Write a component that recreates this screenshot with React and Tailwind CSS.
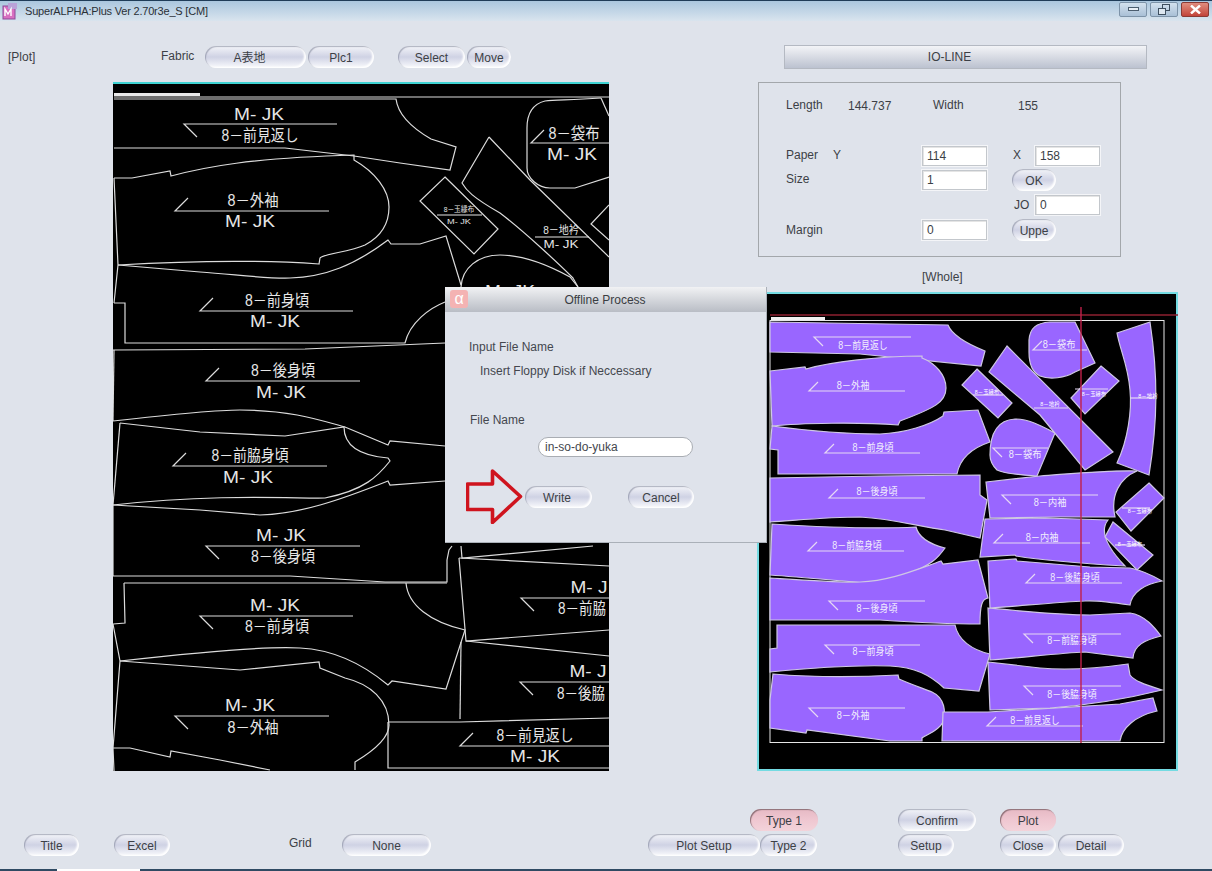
import React from 'react';

// marker layout pieces, all points are in page pixels (svg viewBox starts at panel corner)
const leftLines = [
  'M114 97H609',
  'M114 99H396C398 115 412 128 431 139L456 147L450 170L400 163L354 156L285 148H114',
  'M114 178H132L170 171L171 176C205 167 250 158 354 155V160C375 172 389 190 389 207C389 222 382 236 365 245C350 252 322 254 320 258L319 264C290 262 220 259 118 265',
  'M114 178L118 265L114 303',
  'M118 265L200 272C240 275 270 279 290 278C325 277 355 265 388 240L391 244H420L446 236L461 285',
  'M114 303H125V343H405C410 322 430 308 445 302',
  'M445 177L498 229L474 254L420 201Z',
  'M489 137L462 183C466 190 472 197 500 213C525 232 560 265 573 278L578 287',
  'M489 137L530 180L609 257',
  'M601 98C570 100 556 100 545 101C533 104 527 113 527 128V168C527 178 538 188 550 188H575L609 177',
  'M601 98L609 116',
  'M609 205L591 224L609 240',
  'M461 287C462 268 478 255 500 255C525 255 550 266 570 277L578 287',
  'M113 350L305 349L445 343',
  'M113 421C175 414 220 410 240 410C290 410 320 420 345 427L388 445L390 441L445 446',
  'M120 423L200 432L285 436L344 427C344 440 352 455 388 458L390 461C378 476 365 490 325 498C300 499 220 493 113 505',
  'M120 423L113 505',
  'M113 505L200 510L260 515C300 514 340 500 388 481L390 485L445 481',
  'M113 576H290L385 582H447V560L449 550L452 546',
  'M124 583H447',
  'M124 583L125 623L113 624L120 661',
  'M406 583C408 605 430 622 465 630L446 689L392 681L388 685C370 670 340 650 300 648C270 646 200 652 120 661',
  'M120 661L200 667L240 670L319 662L320 668L345 678C370 684 389 700 389 725C389 740 370 753 355 762V770',
  'M120 661L113 748L114 771',
  'M113 748H130L170 757L171 751L220 760L270 770',
  'M388 722H460L609 718',
  'M388 722V768H609',
  'M461 546L462 558L593 546',
  'M459 558L609 566',
  'M459 558L466 641L609 630',
  'M466 641L609 656',
  'M461 642L460 719',
  'M114 350L113 421',
  'M113 505V576',
];

// x1, x2, y, tick direction (+1 ticks go down, -1 up)
const leftRules = [
  [184, 337, 124, 1], [175, 329, 211, -1], [200, 353, 311, -1], [531, 609, 143, -1],
  [206, 360, 381, -1], [173, 327, 466, -1], [206, 360, 546, 1], [200, 353, 616, 1],
  [175, 329, 716, 1], [460, 609, 746, -1], [521, 609, 598, 1], [520, 609, 682, 1],
];

const leftText = [
  ['M- JK', 259, 114], ['8－前見返し', 260, 135], ['8－外袖', 253, 200], ['M- JK', 250, 221],
  ['8－前身頃', 277, 300], ['M- JK', 275, 321], ['8－袋布', 574, 133], ['M- JK', 572, 154],
  ['M- JK', 510, 291], ['8－後身頃', 283, 370], ['M- JK', 281, 392], ['8－前脇身頃', 250, 455],
  ['M- JK', 248, 477], ['M- JK', 281, 535], ['8－後身頃', 283, 556], ['M- JK', 275, 605],
  ['8－前身頃', 277, 626], ['M- JK', 250, 705], ['8－外袖', 253, 727], ['8－前見返し', 535, 735],
  ['M- JK', 535, 756], ['M- J', 589, 587, 37], ['8－前脇', 582, 608, 48], ['M- J', 588, 671, 37],
  ['8－後脇', 581, 693, 48],
];

const purplePieces = [
  'M770 352L860 354L981 366L985 351C965 343 952 335 948 325L770 322Z',
  'M770 371L805 367L806 369C830 362 880 356 922 356V358C935 363 946 375 946 388C946 402 935 408 900 421L898 425C860 422 800 423 772 426Z',
  'M772 426C810 431 850 434 880 434C905 433 930 425 943 416L944 412L978 410L990 442C972 448 960 458 957 474H778V450L770 449Z',
  'M770 478L880 476L980 475V495L987 500L980 538L945 530C920 527 895 519 860 517C830 517 800 520 770 522Z',
  'M772 524C820 527 880 529 916 527C918 535 925 543 945 548C938 558 932 565 905 575C890 580 880 583 865 583C830 580 800 577 770 575Z',
  'M770 578C800 580 840 583 860 582C890 581 915 570 941 561L943 564L978 560L988 598C982 599 980 605 980 624C950 624 910 622 880 620H770Z',
  'M777 625H955C958 640 972 650 990 654L979 691L944 688C930 675 915 667 890 666C860 665 810 668 770 672V649L777 648Z',
  'M773 674C810 677 860 677 898 675L899 679C915 686 925 689 932 692C945 698 946 712 943 722C938 732 925 735 922 738V741H890L807 730L806 733L770 728V700Z',
  'M943 712H988L1120 704L1153 698L1157 711C1135 716 1122 728 1120 741H942Z',
  'M988 662L1040 668C1070 671 1100 668 1128 664L1130 675C1135 682 1150 686 1162 690C1130 698 1090 705 1050 708L990 710Z',
  'M988 608C1020 611 1060 615 1090 615L1130 613C1145 615 1155 628 1161 636C1145 640 1134 645 1133 658L1085 652C1060 653 1020 658 990 660Z',
  'M988 561L1016 559L1017 561L1090 567L1130 568C1145 571 1155 577 1162 581C1145 584 1132 592 1130 605C1110 602 1095 600 1085 601C1060 602 1020 606 990 608Z',
  'M985 519L1045 518L1108 520C1100 530 1105 545 1125 566C1090 564 1040 560 1016 556L1015 555L980 557Z',
  'M986 482L1040 476C1080 473 1110 470 1137 471C1120 478 1110 495 1115 517H1060L990 518Z',
  'M990 455C990 432 998 420 1015 419C1028 419 1040 425 1055 433L1037 476C1020 475 1005 474 997 470C992 465 990 460 990 455Z',
  'M1075 322L1095 363L1075 372C1065 378 1050 380 1040 376C1032 372 1029 362 1029 352V340C1030 328 1036 323 1050 322Z',
  'M1007 346L989 372L1040 415L1085 470L1113 452Z',
  'M977 369L1012 403L998 418L962 385Z',
  'M1101 366L1119 381L1085 414L1071 398Z',
  'M1117 333L1150 322C1158 375 1158 420 1149 475L1117 463C1128 440 1132 410 1130 390C1128 365 1120 350 1117 333Z',
  'M1149 483L1164 498L1131 531L1116 512Z',
  'M1113 522L1153 555L1137 570L1105 537Z',
];

const rightRules = [
  [814, 911, 337, 1], [809, 905, 391, -1], [825, 920, 453, -1], [829, 925, 498, -1],
  [808, 904, 551, -1], [829, 925, 601, 1], [825, 920, 645, 1], [809, 905, 708, 1],
  [987, 1083, 726, -1], [1024, 1121, 686, 1], [1024, 1121, 634, 1], [1026, 1122, 583, -1],
  [994, 1090, 543, -1], [1002, 1098, 495, 1], [993, 1048, 448, 1], [1033, 1087, 350, -1],
  [1034, 1068, 408, 0], [973, 1003, 395, 0], [1075, 1108, 389, 0], [1130, 1155, 398, 0],
  [1122, 1150, 508, 0], [1115, 1145, 545, 0],
];

const rightText = [
  ['8－前見返し', 863, 345], ['8－外袖', 853, 385], ['8－前身頃', 873, 447], ['8－後身頃', 877, 491],
  ['8－前脇身頃', 857, 545], ['8－後身頃', 877, 608], ['8－前身頃', 873, 651], ['8－外袖', 853, 715],
  ['8－前見返し', 1035, 720], ['8－後脇身頃', 1072, 694], ['8－前脇身頃', 1072, 640], ['8－後脇身頃', 1075, 577],
  ['8－内袖', 1042, 537], ['8－内袖', 1050, 502], ['8－袋布', 1025, 454], ['8－袋布', 1059, 344],
];

const tinyText = [
  ['8－地衿', 1050, 403], ['8－玉縁布', 987, 391], ['8－玉縁布', 1094, 393],
  ['8－地衿', 1148, 395], ['8－玉縁布', 1140, 510], ['8－玉縁布', 1130, 543],
];

const cadFont = "font-['Liberation_Sans','Noto_Sans_CJK_JP',sans-serif]";

const CadText = ({ t, x, y, w, scale = 1, fill }) => {
  const width = w || (t.startsWith('M') ? 50 : (t.length - 2) * 13 + 25);
  return (
    <text
      x={x}
      y={y}
      fill={fill}
      fontSize={16 * scale}
      textAnchor="middle"
      dominantBaseline="central"
      textLength={width * scale}
      lengthAdjust="spacingAndGlyphs"
    >
      {t}
    </text>
  );
};

const Rules = ({ rules, stroke, tick }) =>
  rules.map(([x1, x2, y, dir], i) => (
    <polyline
      key={i}
      points={dir === 0 ? `${x1},${y} ${x2},${y}` : `${x1 + tick},${y + dir * tick} ${x1},${y} ${x2},${y}`}
      fill="none"
      stroke={stroke}
      strokeWidth="1.2"
    />
  ));

const Pill = ({ children, className = '', pink = false }) => (
  <button
    className={`h-[22px] shrink-0 rounded-full pt-[2px] text-[12px] leading-none text-[#3c3f46] ${
      pink
        ? 'bg-linear-to-b from-[#e6b9c4] via-[#efc7d1] to-[#f3d3da] shadow-[inset_1px_1px_1px_#8c6f76]'
        : 'bg-linear-to-b from-[#f4f5f9] via-[#cfd2e4] to-[#fafbfd] shadow-[inset_1px_1px_1px_rgba(120,125,145,0.55),inset_-2px_-1px_2px_#ffffff]'
    } ${className}`}
  >
    {children}
  </button>
);

const Field = ({ value }) => (
  <input
    readOnly
    value={value}
    className="h-[20px] w-[65px] border border-[#c3c7cc] bg-white px-[4px] text-[12px] text-[#3c3f46] shadow-[inset_1px_1px_0_#e4e4e4,0_0_0_1px_#f4f5f8] outline-none"
  />
);

const WinButton = ({ children, className }) => (
  <div className={`flex h-[15px] w-[28px] items-center justify-center rounded-[2px] border ${className}`}>{children}</div>
);

const TitleBar = () => (
  <div className="flex h-[21px] shrink-0 items-center border-t border-[#1f3c58] bg-linear-to-b from-[#aac6de] to-[#d9e4ee] pl-[2px] pr-[3px]">
    <svg width="16" height="17" viewBox="0 0 16 17">
      <rect x="1" y="3" width="12" height="13" fill="#d86fc0" stroke="#8c4a9a" />
      <rect x="6" y="0" width="9" height="6" fill="#b9a2d8" />
      <path d="M3 13V6l3 5 3-5v7" fill="none" stroke="#fff" strokeWidth="1.4" />
    </svg>
    <span className="ml-[7px] text-[11px] tracking-[-0.2px] text-[#2b3036]">SuperALPHA:Plus Ver 2.70r3e_S [CM]</span>
    <div className="ml-auto mt-[-4px] flex gap-[3px]">
      <WinButton className="border-[#7d93a8] bg-linear-to-b from-[#d3e1ee] to-[#a9c0d6]">
        <div className="h-[4px] w-[11px] border border-[#4b5d6e] bg-[#e9eff5]" />
      </WinButton>
      <WinButton className="border-[#7d93a8] bg-linear-to-b from-[#d3e1ee] to-[#a9c0d6]">
        <svg width="12" height="11" viewBox="0 0 12 11" fill="none" stroke="#3e4f5f">
          <rect x="4.5" y="0.5" width="7" height="6" />
          <rect x="0.5" y="4.5" width="7" height="6" fill="#dde7f0" />
        </svg>
      </WinButton>
      <WinButton className="border-[#8a3a34] bg-linear-to-b from-[#e08d7e] to-[#c2433a]">
        <svg width="11" height="9" viewBox="0 0 11 9" stroke="#fff" strokeWidth="2.4">
          <path d="M1 0.5l9 8M10 0.5l-9 8" />
        </svg>
      </WinButton>
    </div>
  </div>
);

const LeftMarker = () => (
  <svg viewBox="113 82 496 689" width="496" height="689" className={`ml-[113px] mt-[14px] block bg-black ${cadFont}`}>
    <rect x="113" y="82" width="496" height="2" fill="#3fd3d3" />
    <rect x="114" y="93" width="86" height="3" fill="#e8e8e8" />
    {leftLines.map((d, i) => (
      <path key={i} d={d} fill="none" stroke="#dcdcdc" strokeWidth="1.2" />
    ))}
    <Rules rules={leftRules} stroke="#dcdcdc" tick={13} />
    {leftText.map(([t, x, y, w], i) => (
      <CadText key={i} t={t} x={x} y={y} w={w} fill="#e6e6e6" />
    ))}
    {/* little piece labels */}
    <line x1="437" y1="215" x2="482" y2="215" stroke="#e6e6e6" />
    <CadText t="8－玉縁布" x={459} y={209} scale={0.48} fill="#e6e6e6" />
    <CadText t="M- JK" x={459} y={221} scale={0.48} fill="#e6e6e6" />
    <line x1="535" y1="237" x2="589" y2="237" stroke="#e6e6e6" />
    <CadText t="8－地衿" x={561} y={230} scale={0.7} fill="#e6e6e6" />
    <CadText t="M- JK" x={561} y={244} scale={0.7} fill="#e6e6e6" />
  </svg>
);

const RightMarker = () => (
  <svg viewBox="757 292 421 479" width="421" height="479" className={`mt-[7px] block bg-black ${cadFont}`}>
    <rect x="758" y="293" width="419" height="477" fill="none" stroke="#74dbe2" strokeWidth="2" />
    <rect x="770" y="320.5" width="394" height="422" fill="none" stroke="#e6e6e6" />
    <rect x="771" y="317" width="54" height="3" fill="#f2f2f2" />
    {purplePieces.map((d, i) => (
      <path key={i} d={d} fill="#9966ff" stroke="#cfc8e4" strokeWidth="1.2" />
    ))}
    <Rules rules={rightRules} stroke="#e6d8f4" tick={9} />
    {rightText.map(([t, x, y], i) => (
      <CadText key={i} t={t} x={x} y={y} scale={0.64} fill="#f2eefc" />
    ))}
    {tinyText.map(([t, x, y], i) => (
      <CadText key={i} t={t} x={x} y={y} scale={0.38} fill="#ffffff" />
    ))}
    <line x1="770" y1="315" x2="1178" y2="315" stroke="#8e2030" strokeWidth="1.4" />
    <line x1="1081" y1="307" x2="1081" y2="743" stroke="#c0204a" strokeWidth="1.4" />
  </svg>
);

const InfoBox = () => (
  <div className="ml-[1px] mt-[13px] h-[175px] w-[363px] border border-[#a3a7ab] pl-[27px] pt-[14px] text-[12px] text-[#3c3f46]">
    <div className="flex h-[16px] items-center">
      <span className="w-[62px]">Length</span>
      <span className="mt-[2px] w-[85px]">144.737</span>
      <span className="w-[85px]">Width</span>
      <span className="mt-[2px]">155</span>
    </div>
    <div className="mt-[32px] grid grid-cols-[136px_65px_48px_65px] grid-rows-[21px_22px_22px_22px] items-center gap-y-[3px]">
      <div className="mb-[2px] flex gap-[15px]">
        <span>Paper</span>
        <span>Y</span>
      </div>
      <Field value="114" />
      <span className="mb-[2px] pl-[26px]">X</span>
      <Field value="158" />
      <span className="mb-[2px]">Size</span>
      <Field value="1" />
      <Pill className="ml-[25px] w-[44px]">OK</Pill>
      <div />
      <div />
      <div />
      <span className="pl-[27px]">JO</span>
      <Field value="0" />
      <span>Margin</span>
      <Field value="0" />
      <Pill className="ml-[25px] w-[44px]">Uppe</Pill>
    </div>
  </div>
);

const OfflineDialog = () => (
  <div className="absolute left-[445px] top-[287px] h-[256px] w-[322px] border-b border-r border-[#aab0b8] bg-[#dfe3eb] text-[12px] text-[#44474e]">
    <div className="relative flex h-[25px] items-center justify-center bg-linear-to-b from-[#f1f2f4] to-[#b9bdc5]">
      <div className="absolute left-[5px] top-[3px] flex h-[18px] w-[18px] items-center justify-center rounded-[3px] bg-[#f4b3b3] text-[16px] leading-none text-white">
        α
      </div>
      <span className="ml-[-1px] text-[#3a3d42]">Offline Process</span>
    </div>
    <div className="flex flex-col">
      <p className="ml-[24px] mt-[27px] h-[16px] leading-[16px]">Input File Name</p>
      <p className="ml-[35px] mt-[8px] h-[16px] leading-[16px]">Insert Floppy Disk if Neccessary</p>
      <p className="ml-[25px] mt-[33px] h-[16px] leading-[16px]">File Name</p>
      <input
        readOnly
        value="in-so-do-yuka"
        className="ml-[93px] mt-[9px] h-[20px] w-[155px] rounded-full border border-[#a9adb3] bg-white px-[6px] text-[12px] text-[#44474e] outline-none"
      />
      <div className="ml-[21px] mt-[13px] flex h-[53px] items-center">
        <svg width="57" height="55" viewBox="466 469 57 55" className="shrink-0">
          <path d="M467.500 484h25v-13l28 25.500-28 26v-13h-25z" fill="none" stroke="#cf141e" strokeWidth="3.600" strokeLinejoin="round" />
        </svg>
        <Pill className="ml-[2px] w-[67px] pr-[3px]">Write</Pill>
        <Pill className="ml-[36px] w-[66px]">Cancel</Pill>
      </div>
    </div>
  </div>
);

const App = () => (
  <div className="relative flex h-[871px] w-[1212px] flex-col overflow-hidden bg-[#dfe3eb] font-['Liberation_Sans',sans-serif] text-[12px] text-[#3c3f46]">
    <TitleBar />

    <div className="flex h-[750px] shrink-0">
      <div className="w-[757px] shrink-0 pt-[25px]">
        <div className="flex h-[22px] items-center pl-[8px]">
          <span className="w-[153px]">[Plot]</span>
          <span className="w-[45px] pb-[3px]">Fabric</span>
          <Pill className="ml-[-1px] w-[101px] pr-[12px] font-['Liberation_Sans','Noto_Sans_CJK_JP',sans-serif]">A表地</Pill>
          <Pill className="ml-[2px] w-[66px]">Plc1</Pill>
          <Pill className="ml-[24px] w-[67px]">Select</Pill>
          <Pill className="ml-[2px] w-[44px]">Move</Pill>
        </div>
        <LeftMarker />
      </div>

      <div className="w-[421px] shrink-0 pt-[24px]">
        <div className="ml-[27px] flex h-[24px] w-[363px] items-center justify-center border border-[#b4b9c2] bg-linear-to-b from-[#f3f4f7] to-[#bcc2d0] pr-[32px]">
          IO-LINE
        </div>
        <InfoBox />
        <p className="ml-[165px] mt-[12px] h-[16px] leading-[16px]">[Whole]</p>
        <RightMarker />
      </div>
    </div>

    <div className="mt-[38px] flex h-[47px] shrink-0 items-end">
      <Pill className="ml-[24px] w-[55px]">Title</Pill>
      <Pill className="ml-[35px] w-[56px]">Excel</Pill>
      <span className="ml-[119px] w-[24px] pb-[4px]">Grid</span>
      <Pill className="ml-[29px] w-[89px]">None</Pill>

      <div className="ml-[217px] flex w-[170px] flex-col gap-[3px]">
        <div className="flex justify-end">
          <Pill pink className="w-[68px]">Type 1</Pill>
        </div>
        <div className="flex">
          <Pill className="w-[112px]">Plot Setup</Pill>
          <Pill className="w-[57px]">Type 2</Pill>
        </div>
      </div>

      <div className="ml-[80px] flex w-[78px] flex-col gap-[3px]">
        <Pill className="w-[78px]">Confirm</Pill>
        <Pill className="w-[56px]">Setup</Pill>
      </div>

      <div className="ml-[24px] flex flex-col gap-[3px]">
        <Pill pink className="w-[56px]">Plot</Pill>
        <div className="flex gap-[2px]">
          <Pill className="w-[56px]">Close</Pill>
          <Pill className="w-[66px]">Detail</Pill>
        </div>
      </div>
    </div>

    <div className="mt-[13px] h-[2px] shrink-0 bg-[#2f4a63]">
      <div className="ml-[57px] h-[2px] w-[83px] bg-white" />
    </div>

    <OfflineDialog />
  </div>
);

export default App;
